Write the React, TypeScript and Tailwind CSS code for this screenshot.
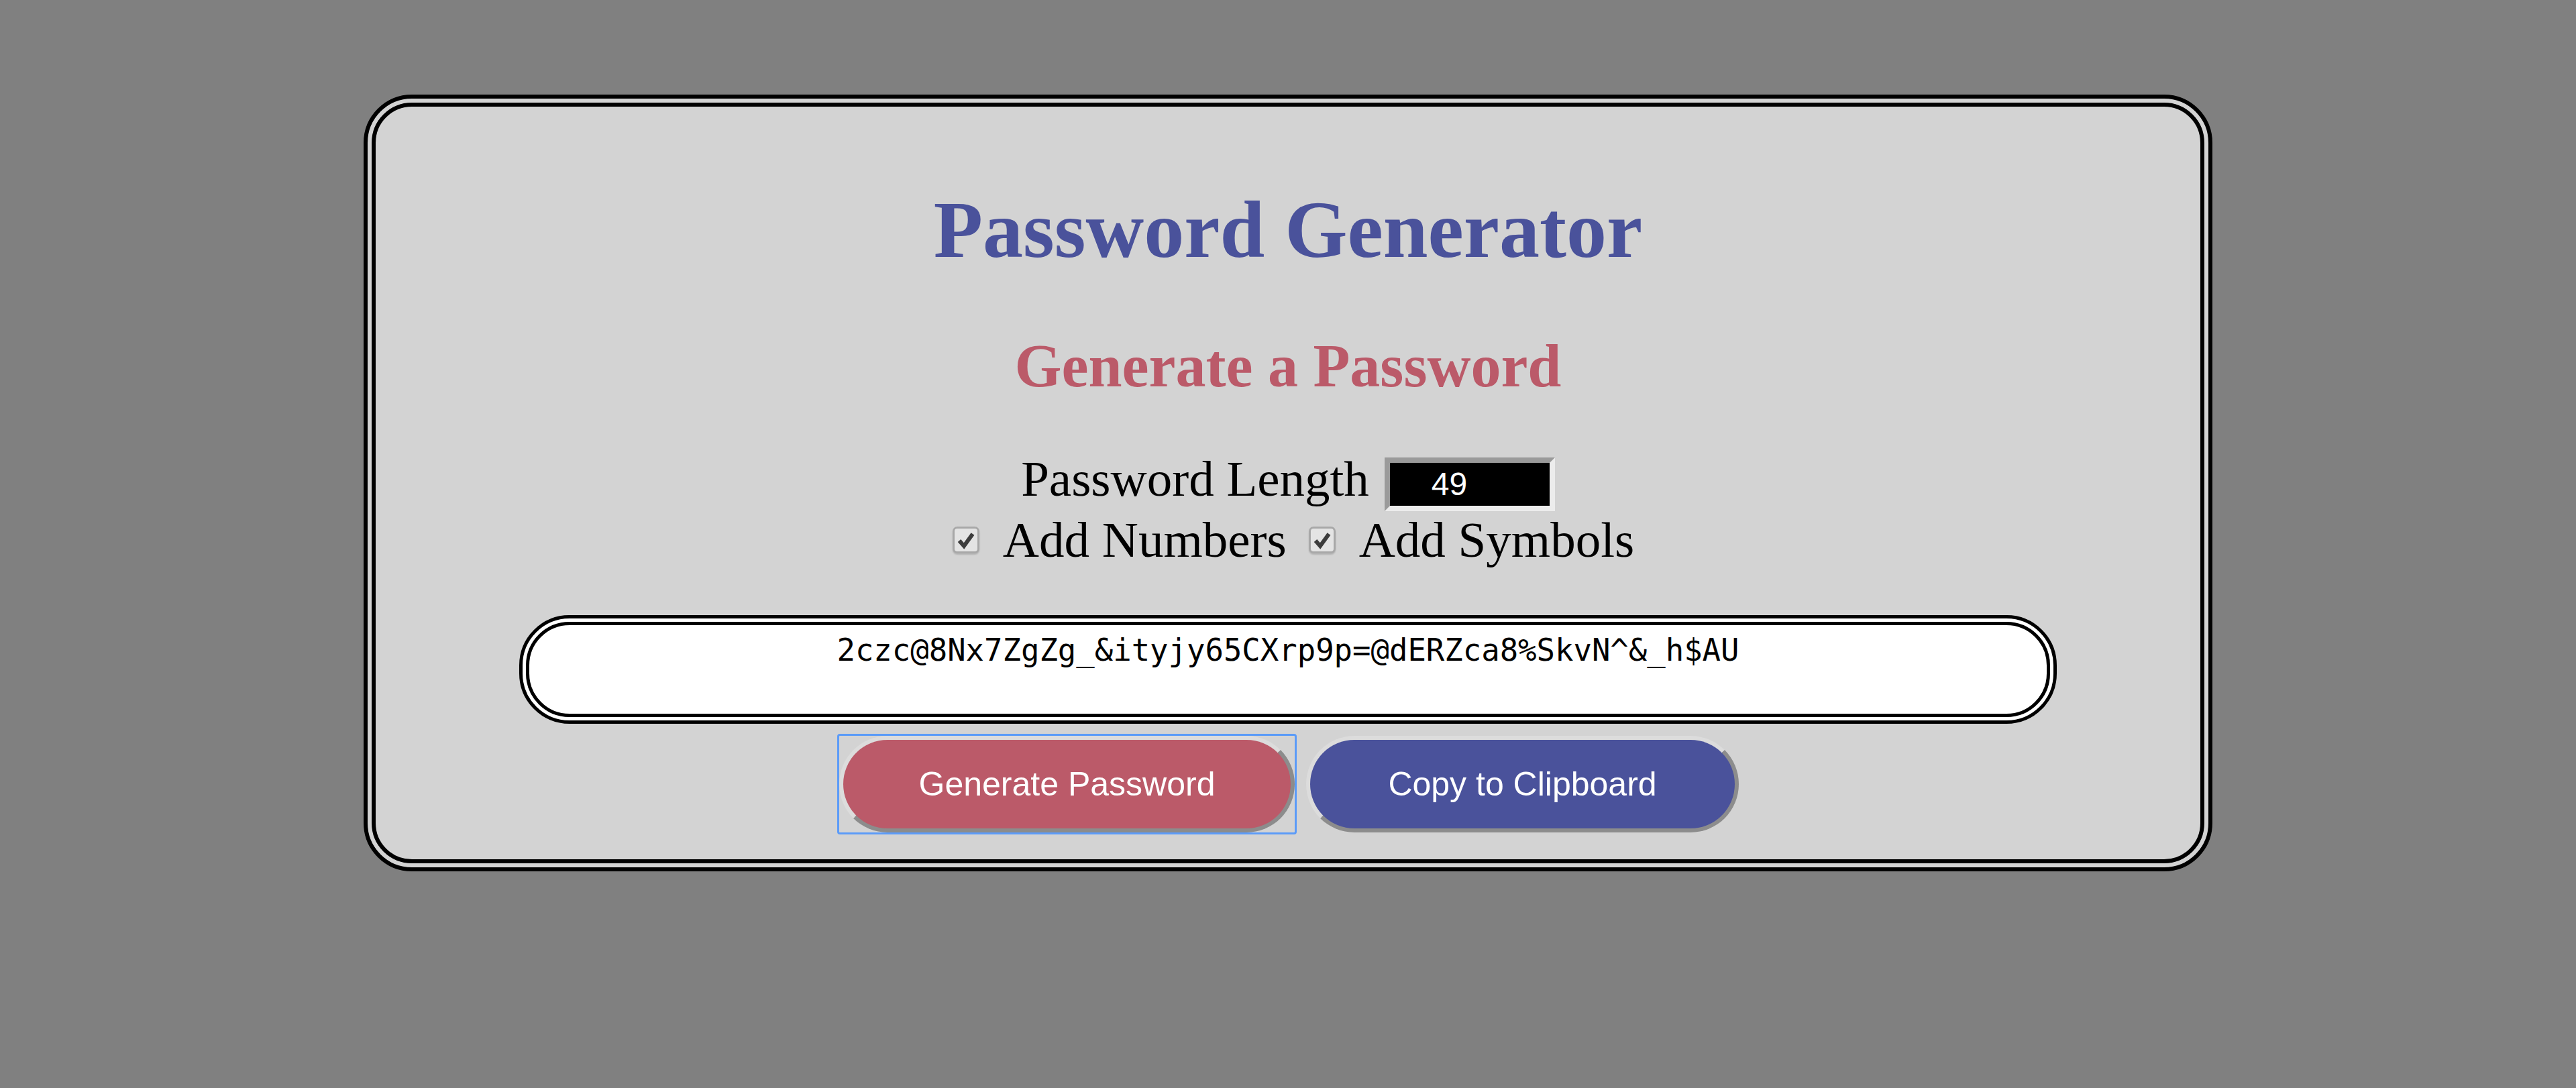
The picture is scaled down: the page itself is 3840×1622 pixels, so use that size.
import React from 'react';

const serif = { fontFamily: '"Liberation Serif", "Times New Roman", serif' };
const sans = { fontFamily: '"Liberation Sans", Arial, sans-serif' };
const mono = { fontFamily: '"DejaVu Sans Mono", "Liberation Mono", monospace' };

const password = '2czc@8Nx7ZgZg_&ityjy65CXrp9p=@dERZca8%SkvN^&_h$AU';

const CheckBox: React.FC = () => (
    <div className="w-[40px] h-[40px] rounded-[7px] border-[3px] border-[#a8a8a8] bg-[#e4e4e4] shadow-[0_2px_2px_rgba(0,0,0,0.15)] flex items-center justify-center">
        <svg width="30" height="30" viewBox="0 0 30 30">
            <path d="M5 16 L12 24 L25 6" fill="none" stroke="#3c3c3c" strokeWidth="6" strokeLinejoin="miter" />
        </svg>
    </div>
);

const PillButton: React.FC<{ label: string; color: string; width: string }> = ({ label, color, width }) => (
    <button
        className={`${width} ${color} h-[144px] rounded-full border-[6px] border-solid border-t-[#dcdcdc] border-l-[#dcdcdc] border-r-[#8c8c8c] border-b-[#8c8c8c] text-white text-[50px] leading-none flex items-center justify-center`}
        style={sans}
    >
        {label}
    </button>
);

const App: React.FC = () => {
    return (
        <div className="min-h-screen bg-[#808080] pt-[141px] flex justify-center items-start">
            <div className="w-[2756px] border-[18px] border-double border-black rounded-[72px] bg-[#d3d3d3] pt-[114px] pb-[37px] flex flex-col items-center">
                <h1 className="text-[120px] leading-[140px] font-bold text-[#4a529b]" style={serif}>
                    Password Generator
                </h1>
                <h2 className="mt-[83px] text-[90px] leading-[100px] font-bold text-[#bb5a69]" style={serif}>
                    Generate a Password
                </h2>

                {/* length */}
                <div className="mt-[86px] h-[80px] flex items-start justify-center">
                    <span className="text-[75px] leading-[64px] text-black" style={serif}>Password Length</span>
                    <div
                        className="ml-[23px] w-[254px] h-[80px] border-[8px] border-solid border-t-[#9a9a9a] border-l-[#9a9a9a] border-r-[#ececec] border-b-[#ececec] bg-black text-white text-[48px] leading-none pl-[62px] flex items-center"
                        style={sans}
                    >
                        49
                    </div>
                </div>

                {/* options */}
                <div className="h-[85px] flex items-center justify-center pl-[16px]">
                    <CheckBox />
                    <span className="ml-[35px] text-[75px] leading-[85px] text-black" style={serif}>Add Numbers</span>
                    <div className="ml-[33px]"><CheckBox /></div>
                    <span className="ml-[35px] text-[75px] leading-[85px] text-black" style={serif}>Add Symbols</span>
                </div>

                {/* output */}
                <div
                    className="mt-[70px] w-[2292px] h-[162px] border-[15px] border-double border-black rounded-[75px] bg-white pt-[12px] text-center text-[45.6px] leading-[52px] text-black"
                    style={mono}
                >
                    {password}
                </div>

                {/* actions */}
                <div className="mt-[15px] flex items-center gap-[14px]">
                    <div className="border-[3px] border-[#5b9bf8] rounded-[4px]">
                        <PillButton label="Generate Password" color="bg-[#bb5a69]" width="w-[679px]" />
                    </div>
                    <PillButton label="Copy to Clipboard" color="bg-[#4a529b]" width="w-[645px]" />
                </div>
            </div>
        </div>
    );
};

export default App;
